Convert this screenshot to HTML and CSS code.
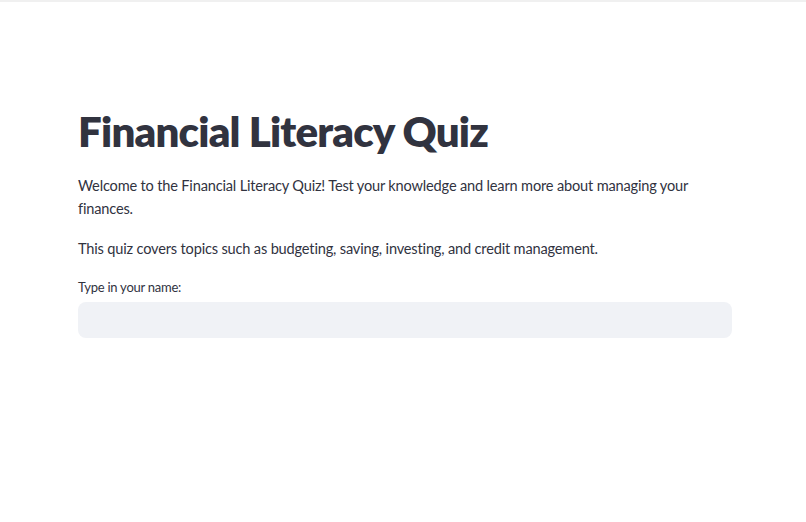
FILE: index.html
```html
<!DOCTYPE html>
<html lang="en">
<head>
    <meta charset="UTF-8">
    <meta name="viewport" content="width=device-width, initial-scale=1.0">
    <title>Financial Literacy Quiz</title>
    <link rel="stylesheet" href="styles.css">
</head>
<body>
    <div class="topbar"></div>
    <main class="main">
        <h1 class="title">Financial Literacy Quiz</h1>
        <p class="text">Welcome to the Financial Literacy Quiz! Test your knowledge and learn more about managing your finances.</p>
        <p class="text">This quiz covers topics such as budgeting, saving, investing, and credit management.</p>
        <div class="field">
            <label class="label" for="name">Type in your name:</label>
            <input class="input" id="name" type="text">
        </div>
    </main>
</body>
</html>
```

FILE: styles.css
```css
body {
    margin: 0;
    background: #ffffff;
    color: #31333f;
    font-family: Lato, "Noto Sans", sans-serif;
}
.topbar {
    height: 2px;
    background: #f0f0f0;
}
.main {
    width: 654px;
    margin: 0 auto 0 78px;
    padding-top: 104px;
}
.title {
    font-size: 42px;
    font-weight: 800;
    letter-spacing: -0.8px;
    line-height: 1.2;
    margin: 0 0 18px;
}
.text {
    font-size: 14.6px;
    letter-spacing: -0.18px;
    line-height: 23px;
    margin: 0 0 17px;
}
.field {
    margin-top: 18px;
}
.label {
    display: block;
    font-size: 13px;
    letter-spacing: -0.25px;
    line-height: 18px;
    margin-bottom: 6px;
}
.input {
    display: block;
    box-sizing: border-box;
    width: 100%;
    height: 36px;
    border: none;
    border-radius: 8px;
    background: #f0f2f6;
    outline: none;
}
```
